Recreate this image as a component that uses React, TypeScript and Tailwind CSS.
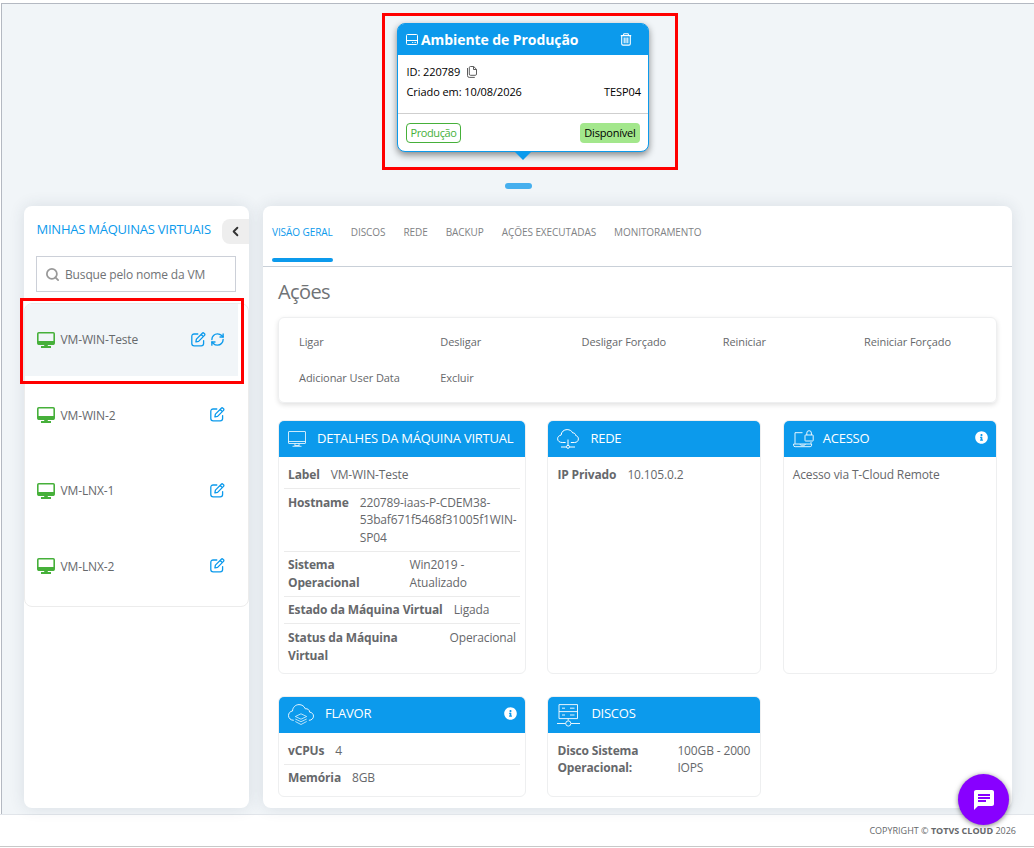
import type { ReactNode } from 'react';
import { FaInfoCircle } from 'react-icons/fa';
import { MdChat } from 'react-icons/md';
import { ChevronLeft, RefreshCw, Search } from 'lucide-react';

const machines = [
  { name: 'VM-WIN-Teste', active: true },
  { name: 'VM-WIN-2', active: false },
  { name: 'VM-LNX-1', active: false },
  { name: 'VM-LNX-2', active: false },
];

const tabs = ['VISÃO GERAL', 'DISCOS', 'REDE', 'BACKUP', 'AÇÕES EXECUTADAS', 'MONITORAMENTO'];

const actions = [
  'Ligar',
  'Desligar',
  'Desligar Forçado',
  'Reiniciar',
  'Reiniciar Forçado',
  'Adicionar User Data',
  'Excluir',
];

function DriveIcon() {
  return (
    <svg width="12" height="12" viewBox="0 0 12 12" fill="none" stroke="currentColor" className="shrink-0">
      <rect x="0.5" y="0.5" width="11" height="10" rx="1" />
      <path d="M0.5 6.5h11M6.2 8.5h1M8.6 8.5h1.2" />
    </svg>
  );
}

function TrashIcon() {
  return (
    <svg width="12" height="13" viewBox="0 0 12 13" fill="none" stroke="currentColor" strokeWidth="1.1">
      <path d="M0.8 2.6h10.4M3.6 2.6V1.4q0-.7.7-.7h3.4q.7 0 .7.700v1.200M1.700 3v7.800q0 1.300 1.300 1.300h6q1.300 0 1.300-1.300V3M4.200 4.600v5.600M6 4.600v5.600M7.800 4.600v5.600" />
    </svg>
  );
}

function CopyIcon() {
  return (
    <svg width="10" height="12" viewBox="0 0 10 12" fill="none" stroke="#4a4a4a" strokeWidth="0.9">
      <path d="M3.500.5h3.200l2.800 2.800v4.800q0 1.200-1.200 1.200H3.500q-1.200 0-1.200-1.200V1.700q0-1.200 1.200-1.200zM6.500.7v2.800h2.800M.5 2v7.600q0 1.800 1.800 1.800h5.500" />
    </svg>
  );
}

function MonitorIcon() {
  return (
    <svg width="18" height="16" viewBox="0 0 18 16" className="-mt-px text-[#46b03a]">
      <rect x="0.8" y="0.8" width="16.400" height="11.500" rx="1" fill="none" stroke="currentColor" strokeWidth="1.600" />
      <path d="M1 9h16v3.500H1zM7.200 12.500h3.600V14H14v2H4v-2h3.200z" fill="currentColor" />
    </svg>
  );
}

function EditIcon() {
  return (
    <svg
      width="15"
      height="15"
      viewBox="0 0 15 15"
      fill="none"
      stroke="currentColor"
      strokeWidth="1.300"
      strokeLinecap="round"
      strokeLinejoin="round"
    >
      <path d="M6.800 2H3.200Q.8 2 .8 4.400v7q0 2.400 2.400 2.400h7q2.400 0 2.400-2.400V8.600" />
      <path d="M4.900 9.900l.5-2.800L11.300 1.200q.8-.8 1.600 0l.6.6q.8.800 0 1.600L7.600 9.400zM10.200 2.400l2.100 2.100" />
    </svg>
  );
}

function DesktopIcon() {
  return (
    <svg width="18" height="16" viewBox="0 0 18 16" fill="none" stroke="#fff" strokeWidth="0.8" className="shrink-0">
      <rect x="0.5" y="0.5" width="17" height="12" rx="0.5" />
      <path d="M0.5 10.500h17M7.200 12.500l-.5 2h4.600l-.5-2M4.500 15.300h9" />
    </svg>
  );
}

function NetworkIcon() {
  return (
    <svg width="22" height="20" viewBox="0 0 22 20" fill="none" stroke="#fff" className="shrink-0">
      <path d="M8.600 13.500H5.200C2.600 13.500.6 12 .6 9.800c0-2 1.500-3.400 3.500-3.700C4.300 2.800 6.900.6 10.100.6c2.600 0 4.600 1.200 5.600 3.300 1.700-.1 2.900 1 3 2.600 1.600.4 2.700 1.700 2.700 3.400 0 2.100-1.600 3.600-3.800 3.600h-3.800" />
      <path d="M11 10.500v5.700M4 18h5.400M12.600 18H18" />
      <circle cx="11" cy="17.800" r="1.500" />
    </svg>
  );
}

function AccessIcon() {
  return (
    <svg width="21" height="18" viewBox="0 0 21 18" fill="none" stroke="#fff" strokeWidth="0.9" className="shrink-0">
      <path d="M9.500 2.700H2v11M18 12v1.700M.6 14h18v1.200q0 1.500-1.500 1.500h-15Q.6 16.700.6 15.200zM7 14.200q.2 1 1.200 1h3q1 0 1.200-1" />
      <rect x="12" y="5" width="8.200" height="6" rx="0.500" />
      <path d="M13.800 5V3a2.300 2.300 0 0 1 4.600 0v2" />
    </svg>
  );
}

function FlavorIcon() {
  return (
    <svg width="26" height="22" viewBox="0 0 26 22" fill="none" stroke="#fff" strokeWidth="0.9" className="shrink-0">
      <path d="M5.800 16.300C2.700 16.300.5 14.200.5 11.600c0-2.400 1.600-4.300 4-4.600C4.700 3.300 7.500.6 11 .6c3 0 5.300 1.600 6.300 4.200 2.400-.4 4.200 1.100 4.300 3.300 2.300.3 3.900 1.900 3.900 4 0 2.400-1.900 4.200-4.600 4.200" />
      <path d="M7.300 12.500l5.700-2.700 5.700 2.700-5.700 2.700zM7.300 15l5.700 2.700 5.700-2.700M7.300 17.500l5.700 3 5.700-3" strokeWidth="0.700" />
    </svg>
  );
}

function DisksIcon() {
  return (
    <svg width="23" height="23" viewBox="0 0 23 23" fill="none" stroke="#fff" strokeWidth="0.9" className="shrink-0">
      <path d="M2 .6h18.500v14H2zM2 7.600h18.500M5 4.200h3M13 4.200h4.500M5 11h3M13 11h4.500M11.200 14.600v2M0 19.500h8.600M14 19.500h9" />
      <circle cx="11.300" cy="19.500" r="2.600" />
    </svg>
  );
}

interface PanelProps {
  title: string;
  icon: ReactNode;
  titleClassName?: string;
  info?: boolean;
  children: ReactNode;
}

function Panel({ title, icon, titleClassName = '', info = false, children }: PanelProps) {
  return (
    <section className="overflow-hidden rounded-md border border-[#eeeff0] bg-white">
      <header className="flex h-9 items-center bg-[#0c9aec] pr-2 pl-[9px] text-white">
        {icon}
        <h3 className={`text-[13px] tracking-[-0.24px] whitespace-nowrap ${titleClassName}`}>{title}</h3>
        {info && <FaInfoCircle className="mb-[3px] ml-auto size-[13px]" />}
      </header>
      <div className="px-[5px]">{children}</div>
    </section>
  );
}

interface FieldProps {
  label: string;
  value: string;
  className?: string;
  labelClassName?: string;
  valueClassName?: string;
}

function Field({ label, value, className = '', labelClassName = '', valueClassName = '' }: FieldProps) {
  return (
    <div className={`flex px-1 leading-[17.700px] ${className}`}>
      <strong className={`shrink-0 font-bold ${labelClassName}`}>{label}</strong>
      <span className={`shrink-0 ${valueClassName}`}>{value}</span>
    </div>
  );
}

function EnvironmentCard() {
  return (
    <div className="flex h-[157px] w-[296px] border-[3px] border-[#ff0000] pt-[7px] pl-3">
      <div className="relative h-[129px] w-[252px] rounded-lg border border-[#0c9aec] bg-white text-[11px] tracking-[-0.080px] text-black shadow-[0_3px_7px_rgba(0,0,0,0.45)]">
        <div className="flex h-[31px] items-center rounded-t-md bg-[#0c9aec] pr-4 pl-2 text-white">
          <DriveIcon />
          <h1 className="ml-[3px] text-[14px] font-bold">Ambiente de Produção</h1>
          <span className="mb-px ml-auto">
            <TrashIcon />
          </span>
        </div>
        <div className="h-[59px] border-b border-[#cfcfcf] pt-[7px] pr-[7px] pl-[8.500px] leading-5">
          <div className="flex items-center gap-[7px]">
            ID: 220789 <CopyIcon />
          </div>
          <div className="flex justify-between">
            <span>Criado em: 10/08/2026</span>
            <span>TESP04</span>
          </div>
        </div>
        <div className="flex justify-between px-2 pt-[9px] text-center leading-[17px]">
          <span className="h-5 w-[55px] rounded border border-[#46b03a] tracking-[-0.400px] text-[#46b03a]">Produção</span>
          <span className="h-5 w-[60px] rounded bg-[#a3e78c] leading-[19px] tracking-[-0.200px]">Disponível</span>
        </div>
        <div className="absolute top-[127px] left-[116px] size-0 border-x-[9px] border-t-[9px] border-x-transparent border-t-[#0c9aec]" />
      </div>
    </div>
  );
}

function Sidebar() {
  return (
    <aside className="relative h-[602px] w-[225px] rounded-lg bg-white shadow-[0_0_16px_rgba(40,60,80,0.12)]">
      <div className="flex h-[50px] items-start justify-between pl-[12.500px]">
        <h2 className="mt-[13px] text-[13px] leading-5 tracking-[-0.240px] whitespace-nowrap text-[#0c9aec]">
          MINHAS MÁQUINAS VIRTUAIS
        </h2>
        <button className="mt-[13px] flex h-[25px] w-[27px] items-center justify-center rounded-l-lg bg-[#eeeeee] pr-px text-[#333]">
          <ChevronLeft size={15} strokeWidth={3} />
        </button>
      </div>
      <div className="ml-3 flex h-9 w-[200px] items-center border border-[#ccd0d8] pl-2">
        <Search size={15} strokeWidth={2.800} className="text-[#999]" />
        <span className="mt-px ml-[5px] text-[12px] tracking-[-0.150px] text-[#707376]">Busque pelo nome da VM</span>
      </div>
      <ul className="mt-[11px] h-[304px] overflow-hidden rounded-lg border border-[#ececec]">
        {machines.map((vm) => (
          <li
            key={vm.name}
            className={`mb-[3.500px] flex h-[72px] w-[213px] items-center pr-[13px] pl-3 ${vm.active ? 'bg-[#f1f5f8]' : ''}`}
          >
            <MonitorIcon />
            <span className="ml-[5.500px]">{vm.name}</span>
            <span className="mb-[2px] ml-auto flex gap-1 text-[#0c9aec]">
              <EditIcon />
              {vm.active && <RefreshCw size={15} strokeWidth={2.200} />}
            </span>
          </li>
        ))}
      </ul>
      {/* Highlight around the selected machine */}
      <div className="absolute top-[92px] left-[-4px] h-[86px] w-[224px] border-[3px] border-[#ff0000]" />
    </aside>
  );
}

function Overview() {
  return (
    <main className="h-[602px] w-[749px] rounded-lg bg-white shadow-[0_0_16px_rgba(40,60,80,0.12)]">
      <nav className="flex h-[61px] gap-[18px] border-b border-[#c9d0d8] pl-[9px] text-[10px] tracking-[-0.070px] text-[#808285]">
        {tabs.map((tab, i) => (
          <div
            key={tab}
            className={`flex h-14 flex-col justify-between pt-[19px] whitespace-nowrap ${i === 0 ? 'text-[#0c9aec]' : ''}`}
          >
            <span className="leading-[15px]">{tab}</span>
            {i === 0 && <span className="h-1 rounded-full bg-[#0c9aec]" />}
          </div>
        ))}
      </nav>
      <div className="px-[15px]">
        <h2 className="pt-[11px] text-[20px] leading-7 tracking-[-0.600px] text-[#707376]">Ações</h2>
        <div className="mt-[11px] grid h-[86px] grid-cols-[repeat(5,141.250px)] grid-rows-[36px_36px] rounded-md border border-[#eeeff0] pt-[6px] pl-5 text-[11px] shadow-[0_2px_5px_rgba(0,0,0,0.12)]">
          {actions.map((action) => (
            <span key={action} className="self-center tracking-[-0.080px]">
              {action}
            </span>
          ))}
        </div>
        <div className="mt-[17px] grid grid-cols-[248px_214px_214px] grid-rows-[254px_101px] gap-x-[21.400px] gap-y-[22px]">
          <Panel title="DETALHES DA MÁQUINA VIRTUAL" icon={<DesktopIcon />} titleClassName="ml-[11px]">
            <div className="divide-y divide-[#ebebeb]">
              <Field label="Label" value="VM-WIN-Teste" className="h-8 pt-[8.500px]" valueClassName="ml-[11px]" />
              <Field
                label="Hostname"
                value="220789-iaas-P-CDEM38-53baf671f5468f31005f1WIN-SP04"
                className="h-[63px] pt-[4.500px]"
                valueClassName="ml-[11px] w-[160px] [overflow-wrap:anywhere]"
              />
              <Field
                label="Sistema Operacional"
                value="Win2019 - Atualizado"
                className="h-[45px] pt-1"
                labelClassName="w-[110px] pr-8"
                valueClassName="ml-[11.500px] w-[70px]"
              />
              <Field label="Estado da Máquina Virtual" value="Ligada" className="h-[27px] pt-1" valueClassName="ml-[11px]" />
              <Field
                label="Status da Máquina Virtual"
                value="Operacional"
                className="h-[45px] justify-between pt-[5px]"
                labelClassName="w-[120px]"
              />
            </div>
          </Panel>
          <Panel title="REDE" icon={<NetworkIcon />} titleClassName="ml-[11px]">
            <Field label="IP Privado" value="10.105.0.2" className="pt-[8.500px]" valueClassName="ml-[11px]" />
          </Panel>
          <Panel title="ACESSO" icon={<AccessIcon />} titleClassName="ml-[9px]" info>
            <p className="px-1 pt-[8.500px] leading-[17.700px]">Acesso via T-Cloud Remote</p>
          </Panel>
          <Panel title="FLAVOR" icon={<FlavorIcon />} titleClassName="mb-[3px] ml-[11px]" info>
            <div className="divide-y divide-[#ebebeb]">
              <Field label="vCPUs" value="4" className="h-8 pt-[8.500px]" valueClassName="ml-[11px]" />
              <Field label="Memória" value="8GB" className="pt-1" valueClassName="ml-[11px]" />
            </div>
          </Panel>
          <Panel title="DISCOS" icon={<DisksIcon />} titleClassName="mb-[3px] ml-[11px]">
            <Field
              label="Disco Sistema Operacional:"
              value="100GB - 2000 IOPS"
              className="justify-between pt-[8.500px]"
              labelClassName="w-[100px]"
              valueClassName="w-[74px]"
            />
          </Panel>
        </div>
      </div>
    </main>
  );
}

export default function App() {
  return (
    <div className="relative flex h-[848px] w-[1034px] flex-col overflow-hidden bg-white pt-[3px] font-['Open_Sans',sans-serif] text-[12px] tracking-[-0.140px] text-[#66686b]">
      <div className="ml-px flex h-[811px] flex-col border-t border-l border-[#b4b9c2] bg-[#f1f5f8]">
        <div className="ml-[380px] pt-[9px]">
          <EnvironmentCard />
        </div>
        <div className="mt-[13px] ml-[503px] h-[6px] w-[27px] rounded-full bg-[#46afee]" />
        <div className="mt-[17px] ml-[22px] flex gap-[14px]">
          <Sidebar />
          <Overview />
        </div>
      </div>
      <footer className="flex h-[33px] items-center justify-end border-t border-b border-t-[#e1e5ea] border-b-[#c8c8c8] pr-[18px] text-[9px] tracking-normal">
        <span>
          COPYRIGHT © <strong>TOTVS CLOUD</strong> 2026
        </span>
      </footer>
      <button className="absolute top-[774px] left-[958px] flex size-[51px] items-center justify-center rounded-full bg-[#8800ff] text-white shadow-[0_1px_5px_rgba(0,0,0,0.5)]">
        <MdChat size={24} />
      </button>
    </div>
  );
}
